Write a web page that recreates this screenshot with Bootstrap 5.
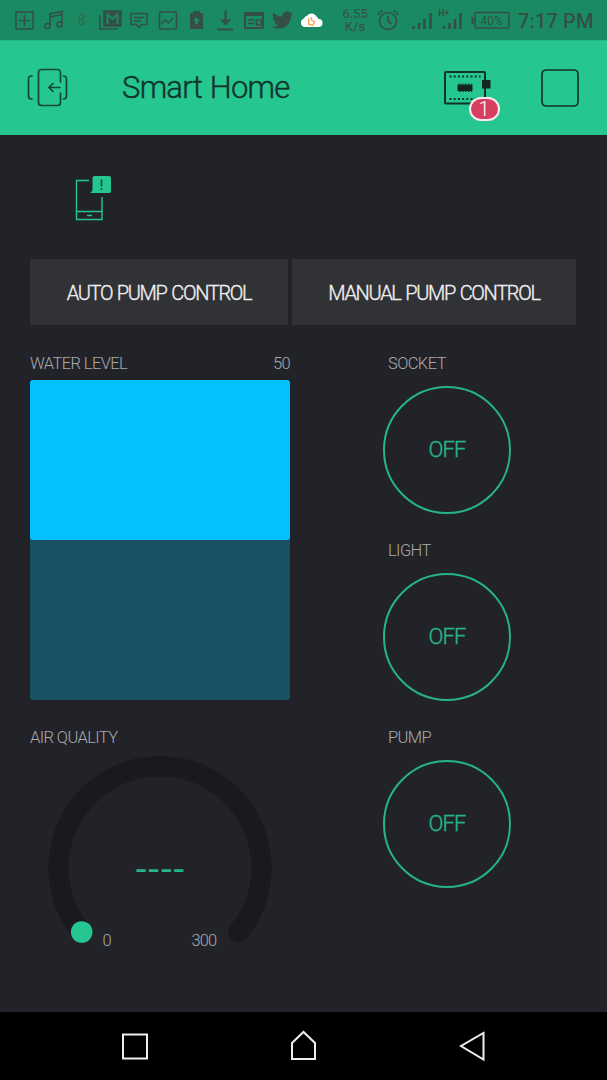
<!DOCTYPE html>
<html lang="en">
<head>
<meta charset="utf-8">
<meta name="viewport" content="width=device-width, initial-scale=1">
<title>Smart Home</title>
<link rel="stylesheet" href="https://cdn.jsdelivr.net/npm/bootstrap@5.3.0/dist/css/bootstrap.min.css">
<style>
body{font-family:Roboto,"Liberation Sans",sans-serif;background:#222328;color:#a9aaad;font-weight:300;overflow:hidden}
svg{display:block;flex:none}
.screen{width:607px;height:1080px}
.statusbar{height:40px;background:#1a8a63;color:#344f44}
.speed{font-size:13px;line-height:13px;width:32px;margin-left:7px;font-weight:400;letter-spacing:.1px}
.clock{font-size:20px;line-height:24px;font-weight:500;margin-left:5px;padding-top:1px;letter-spacing:.15px;white-space:nowrap}
.appbar{height:95px;background:#25c68f;border-top:1px solid #22b585;color:#12332b}
.title{font-size:31px;line-height:40px;margin:0 0 0 53px;font-weight:300;width:322px;letter-spacing:-.75px;word-spacing:1px;-webkit-text-stroke:.4px}
.device{width:56px}
.count{left:24.500px;top:28px;width:31px;height:24px;border:2px solid #fbe9ed;background:#d73f60;color:#fff;font-size:20px;line-height:20px;font-weight:300;border-radius:12px}
.content-area{padding:0 30px}
.notify{padding:40px 0 0 45px;height:124px}
.tab-btn{height:66px;background:#313236;color:#f0f0f0;border:0;border-radius:2px;font-size:20px;font-weight:300;padding:1px 0 0;white-space:nowrap;letter-spacing:-1.3px;word-spacing:1px;-webkit-text-stroke:.35px}
.lbl{font-size:16.5px;line-height:22px;height:20px;white-space:nowrap;letter-spacing:-.6px}
.left-col{width:260px}
.right-col{margin-left:98px}
.tank{height:320px;background:#1a5265;border-radius:3px;margin-top:7px}
.tank>div{background:#04c1fd;border-radius:3px}
.air{margin-top:27px}
.ring{display:block;width:128px;height:128px;border:2px solid #26b487;color:#26b487;border-radius:50%;font-size:22px;font-weight:300;margin:13px 0 0 -5px;letter-spacing:-.9px;background:none;padding:0 0 1px;-webkit-text-stroke:.4px}
.sw{height:187px}
.navkeys{height:68px;background:#000}
</style>
</head>
<body>
<div class="screen d-flex flex-column">
  <div class="statusbar d-flex align-items-center">
    <svg width="332" height="40" fill="none" stroke="#344f44" stroke-width="1.6">
      <rect x="16" y="12" width="17" height="17"/><path d="M24.500 15v11M19 20.500h11"/>
      <path d="M50 26V14l12-2.500V24M50 17l12-2.500"/><circle cx="47.500" cy="26" r="2.500"/><circle cx="59.500" cy="24.500" r="2.500"/>
      <text x="77.500" y="25" font-size="14" font-weight="400" fill="#2d6a50" stroke="none">8</text>
      <path d="M100 15v14h18"/><rect x="104" y="11" width="17" height="15" fill="#344f44"/><path d="M107.500 24V14.500l5 4.500 5-4.500V24" stroke="#1a8a63" stroke-width="2"/>
      <path d="M131 13.500h16v11h-5l-3 3-3-3h-5zM134 17.500h10M134 21h7"/>
      <rect x="159.500" y="12" width="17" height="17" rx="1"/><path d="M161.500 24l4-4 3 3 5-5.500" stroke-width="1.400"/>
      <path d="M190 13h3v-2h7v2h3v16h-13z" fill="#344f44" stroke="none"/><path d="M193 21l3.500-4 3.500 4h-2v3h-3v-3z" fill="#1a8a63" stroke="none"/>
      <path d="M225.500 10v12M217 29.500h16" stroke-width="2"/><path d="M220 19.500h11l-5.500 6z" fill="#344f44" stroke="none"/>
      <rect x="245" y="13" width="18" height="15" stroke-width="2"/><path d="M245 14.500h18" stroke-width="3"/><path d="M248 20h6M248 23.500h6M256 20h5v5h-4z"/>
      <path transform="translate(272 9.500) scale(.88)" d="M23.950 4.570a10 10 0 0 1-2.820.77 4.960 4.960 0 0 0 2.160-2.720c-.95.560-2 .96-3.120 1.180a4.920 4.920 0 0 0-8.380 4.480C7.690 8.100 4.070 6.130 1.640 3.160a4.920 4.920 0 0 0 1.520 6.570 4.900 4.900 0 0 1-2.230-.61v.06a4.920 4.920 0 0 0 3.950 4.830 5 5 0 0 1-2.210.08 4.940 4.940 0 0 0 4.600 3.420A9.870 9.870 0 0 1 0 19.540a13.990 13.990 0 0 0 7.550 2.210c9.050 0 14-7.500 14-13.980 0-.21 0-.42-.02-.63a9.940 9.940 0 0 0 2.420-2.570z" fill="#344f44" stroke="none"/>
      <path d="M304 27a4.500 4.500 0 0 1 0-8.500 3.500 3.500 0 0 1 3-2.500 5.500 5.500 0 0 1 9.500.5 5 5 0 0 1 2 2.500 4 4 0 0 1 0 8z" fill="#fff" stroke="none"/><path d="M309 18l-.5 6 4 1.500 2-3.500-3-2v-3" stroke="#f3a552" stroke-width="1.400"/>
    </svg>
    <div class="speed text-center">6.55<br>K/s</div>
    <svg width="142" height="40" fill="none" stroke="#344f44" stroke-width="1.600">
      <circle cx="17" cy="21" r="8.500"/><path d="M17 16v5.500l4 2.500M6.500 15l5-4.500M27.500 15l-5-4.500"/>
      <g stroke-width="2.600"><path d="M42.500 29v-3M48 29v-6M53.500 29v-10M59.500 29v-16"/><path d="M73 29v-3M78.500 29v-6M84 29v-10M89.500 29v-16"/></g>
      <text x="67.500" y="15.500" font-size="8.500" font-weight="700" fill="#344f44" stroke="none">H+</text>
      <rect x="104" y="12.500" width="34" height="15.500" rx="1"/><path d="M101.500 17v7" stroke-width="2"/>
      <text x="109.500" y="24.500" font-size="12" font-weight="400" fill="#344f44" stroke="none">40%</text>
    </svg>
    <div class="clock">7:17 PM</div>
  </div>

  <header class="appbar d-flex align-items-center">
    <svg class="ms-4" width="45" height="46" fill="none" stroke="#12473a" stroke-width="1.700" stroke-linecap="round">
      <path d="M36.500 17V7.500a3 3 0 0 0-3-3h-16a3 3 0 0 0-3 3v30a3 3 0 0 0 3 3h16a3 3 0 0 0 3-3V28"/><path d="M8 11H7.500a3 3 0 0 0-3 3v17a3 3 0 0 0 3 3h.5M39.500 11a3 3 0 0 1 3 3v17a3 3 0 0 1-3 3M36 22.500H25M29 18.500l-4 4 4 4"/>
    </svg>
    <h1 class="title">Smart Home</h1>
    <div class="device position-relative">
      <svg width="56" height="38" fill="none" stroke="#12332b" stroke-width="2">
        <rect x="1" y="3" width="40" height="31.500" rx="1"/><path d="M5.500 7.500h31M5.500 30h31" stroke-dasharray="2 2.200"/><rect x="13.500" y="15.500" width="15" height="6.500" fill="#12251f" stroke="none"/><path d="M15 15h13M15 22.500h13" stroke-width="1" stroke-dasharray="1.500 1.500"/><rect x="38" y="11" width="8.500" height="8.500" fill="#12251f" stroke="none"/>
      </svg>
      <span class="count position-absolute text-center">1</span>
    </div>
    <svg style="margin-left:40px" width="40" height="40"><rect x="2" y="2" width="36" height="36" rx="4" fill="none" stroke="#12332b" stroke-width="1.700"/></svg>
  </header>

  <main class="content-area flex-grow-1">
    <div class="notify">
      <svg width="38" height="47" fill="none" stroke="#25c68f" stroke-width="1.400">
        <path d="M14 5.500H1.500v39h25.500V22M1.500 36.500H27M12 40.500h5"/>
        <path d="M20 1h14q2 0 2 2v13q0 2-2 2H14.500q3-1 3-4V3q0-2 2.500-2z" fill="#25c68f" stroke="none"/><path d="M26.500 4.500v7M26.500 13v2" stroke="#194b3a" stroke-width="1.600"/>
      </svg>
    </div>
    <div class="d-flex gap-1">
      <button class="tab-btn" style="width:258px">AUTO PUMP CONTROL</button>
      <button class="tab-btn" style="width:284px">MANUAL PUMP CONTROL</button>
    </div>
    <div class="d-flex" style="margin-top:28px">
      <section class="left-col">
        <div class="lbl d-flex justify-content-between"><span>WATER LEVEL</span><span>50</span></div>
        <div class="tank"><div style="height:50%"></div></div>
        <div class="lbl air"><span>AIR QUALITY</span></div>
        <svg width="260" height="210" fill="none">
          <path d="M51.500 185A101.500 101.500 0 1 1 208.500 185" stroke="#191a1e" stroke-width="20.500" stroke-linecap="round"/>
          <circle cx="51.700" cy="185" r="10.800" fill="#25c68f"/>
          <text x="130" y="133" text-anchor="middle" font-family="DejaVu Sans" font-size="35" font-weight="400" fill="#26b487">----</text>
          <text x="72.500" y="199" font-size="16.500" fill="#a9aaad">0</text>
          <text x="161.500" y="199" font-size="16.500" letter-spacing="-.9" fill="#a9aaad">300</text>
        </svg>
      </section>
      <section class="right-col">
        <div class="sw"><div class="lbl">SOCKET</div><button class="ring">OFF</button></div>
        <div class="sw"><div class="lbl">LIGHT</div><button class="ring">OFF</button></div>
        <div class="sw"><div class="lbl">PUMP</div><button class="ring">OFF</button></div>
      </section>
    </div>
  </main>

  <nav class="navkeys">
    <svg width="607" height="68" fill="none" stroke="#eee" stroke-width="2">
      <rect x="123" y="22.500" width="24" height="24"/><path d="M292 47V31l11.500-11L315 31v16zM483.500 21v26.500L461 34z"/>
    </svg>
  </nav>
</div>
<script src="https://cdn.jsdelivr.net/npm/bootstrap@5.3.0/dist/js/bootstrap.bundle.min.js"></script>
</body>
</html>
